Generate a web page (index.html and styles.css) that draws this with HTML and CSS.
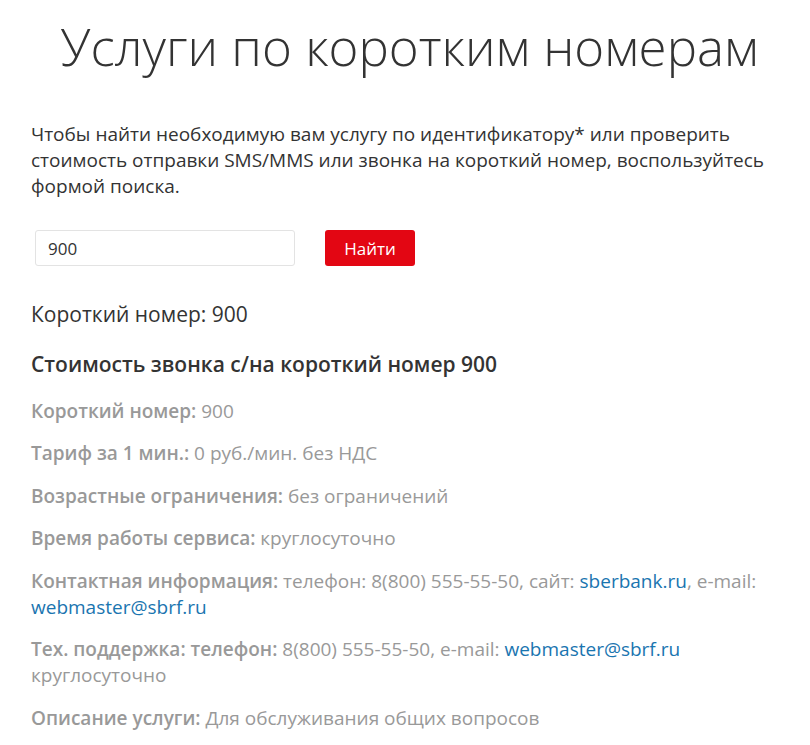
FILE: index.html
```html
<!DOCTYPE html>
<html lang="ru">
<head>
<meta charset="utf-8">
<title>Услуги по коротким номерам</title>
<link rel="stylesheet" href="styles.css">
</head>
<body>
<div class="page">
  <h1 class="title">Услуги по коротким номерам</h1>
  <p class="intro">Чтобы найти необходимую вам услугу по идентификатору* или проверить стоимость отправки SMS/MMS или звонка на короткий номер, воспользуйтесь формой поиска.</p>
  <form class="search">
    <input class="search-input" type="text" value="900">
    <button class="search-btn" type="button">Найти</button>
  </form>
  <div class="result-number">Короткий номер: 900</div>
  <h2 class="result-title">Стоимость звонка с/на короткий номер 900</h2>
  <div class="rows">
    <div class="row"><b>Короткий номер:</b> 900</div>
    <div class="row"><b>Тариф за 1 мин.:</b> 0 руб./мин. без НДС</div>
    <div class="row"><b>Возрастные ограничения:</b> без ограничений</div>
    <div class="row"><b>Время работы сервиса:</b> круглосуточно</div>
    <div class="row"><b>Контактная информация:</b> телефон: 8(800) 555-55-50, сайт: <a href="#">sberbank.ru</a>, e-mail: <a href="#">webmaster@sbrf.ru</a></div>
    <div class="row"><b>Тех. поддержка: телефон:</b> 8(800) 555-55-50, e-mail: <a href="#">webmaster@sbrf.ru</a> круглосуточно</div>
    <div class="row"><b>Описание услуги:</b> Для обслуживания общих вопросов</div>
  </div>
</div>
</body>
</html>
```
FILE: styles.css
```css
html, body {
  margin: 0;
  padding: 0;
  background: #fff;
}
body {
  font-family: "Open Sans", "Noto Sans", sans-serif;
  color: #333;
}
.page {
  padding: 0 31px;
}
.title {
  margin: 0;
  padding: 12px 0 0 9px;
  height: 65px;
  font-size: 51px;
  font-weight: 300;
  line-height: 68px;
  text-align: center;
  color: #333;
  font-stretch: 92.5%;
}
.intro {
  margin: 44px 0 0;
  font-size: 19px;
  line-height: 26px;
  font-stretch: 91%;
}
.search {
  display: flex;
  align-items: center;
  gap: 30px;
  margin-top: 31px;
  padding-left: 4px;
}
.search-input {
  box-sizing: border-box;
  width: 260px;
  height: 36px;
  border: 1px solid #e3e3e3;
  border-radius: 3px;
  padding: 0 12px;
  font-family: inherit;
  font-size: 17px;
  color: #333;
}
.search-btn {
  box-sizing: border-box;
  width: 90px;
  height: 36px;
  border: 0;
  border-radius: 3px;
  background: #e30613;
  color: #fff;
  font-family: inherit;
  font-size: 17px;
}
.result-number {
  margin-top: 33.5px;
  font-size: 21px;
  line-height: 28px;
  font-stretch: 93%;
}
.result-title {
  margin: 22px 0 0;
  font-size: 21px;
  font-weight: 600;
  line-height: 28px;
  font-stretch: 88%;
}
.rows {
  margin-top: 20px;
}
.row {
  font-size: 19px;
  line-height: 26px;
  color: #999;
  margin-bottom: 16.5px;
}
.row b {
  font-weight: 600;
}
.row a {
  color: #1a75b0;
  text-decoration: none;
}
```
